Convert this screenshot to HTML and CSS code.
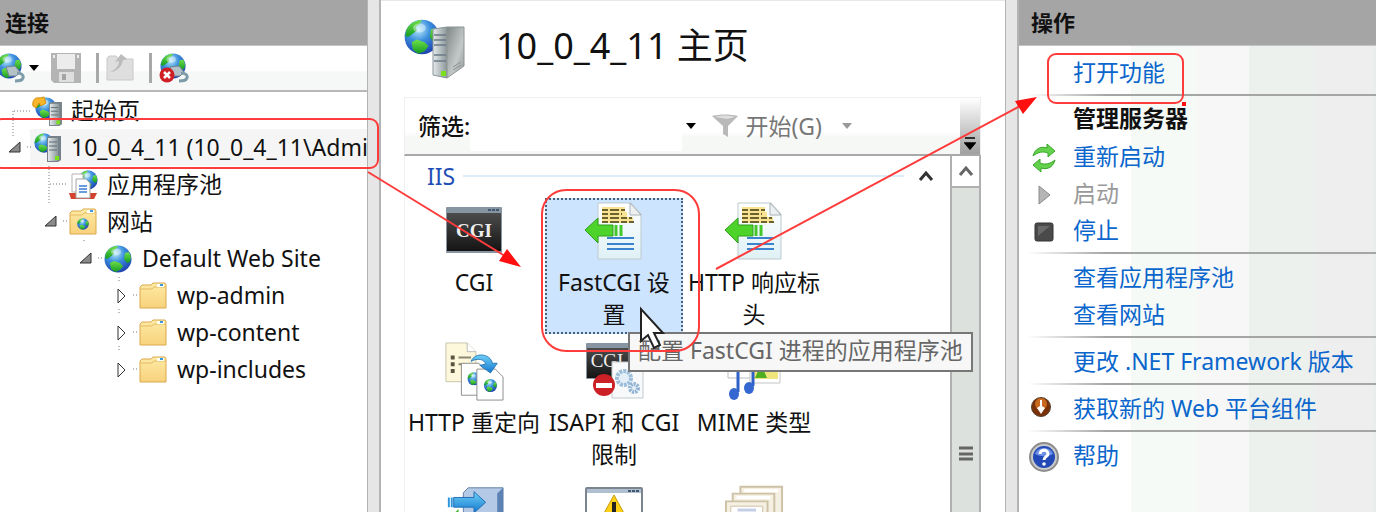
FILE: index.html
```html
<!DOCTYPE html>
<html lang="zh-CN">
<head>
    <meta charset="UTF-8">
    <meta name="viewport" content="width=device-width, initial-scale=1.0">
    <title>10_0_4_11 主页</title>
    <link rel="stylesheet" href="styles.css">
</head>
<body>
    <!-- Shared icon shapes -->
    <svg class="defs" aria-hidden="true">
        <defs>
            <radialGradient id="sea" cx="0.4" cy="0.28" r="0.75">
                <stop offset="0" stop-color="#b8ecfb"/>
                <stop offset="0.45" stop-color="#3b8fdd"/>
                <stop offset="1" stop-color="#1c3fae"/>
            </radialGradient>
            <linearGradient id="land" x1="0" y1="0" x2="0" y2="1">
                <stop offset="0" stop-color="#6fe04a"/>
                <stop offset="1" stop-color="#149a22"/>
            </linearGradient>
            <linearGradient id="metal" x1="0" y1="0" x2="1" y2="0">
                <stop offset="0" stop-color="#e4eaec"/>
                <stop offset="1" stop-color="#8b9698"/>
            </linearGradient>
            <linearGradient id="side" x1="0" y1="0" x2="1" y2="1">
                <stop offset="0" stop-color="#7f8787"/>
                <stop offset="0.6" stop-color="#c3c9c8"/>
                <stop offset="1" stop-color="#8e9595"/>
            </linearGradient>
            <linearGradient id="folderFill" x1="0" y1="0" x2="0" y2="1">
                <stop offset="0" stop-color="#fdeaa4"/>
                <stop offset="1" stop-color="#f8d27c"/>
            </linearGradient>
            <linearGradient id="dark" x1="0" y1="0" x2="0" y2="1">
                <stop offset="0" stop-color="#4c4c4c"/>
                <stop offset="1" stop-color="#141414"/>
            </linearGradient>
            <linearGradient id="paper" x1="0" y1="0" x2="0" y2="1">
                <stop offset="0" stop-color="#ffffff"/>
                <stop offset="1" stop-color="#dff1f6"/>
            </linearGradient>
            <linearGradient id="blueArrow" x1="0" y1="0" x2="0" y2="1">
                <stop offset="0" stop-color="#6fd0f6"/>
                <stop offset="1" stop-color="#1478d0"/>
            </linearGradient>
        </defs>
        <symbol id="globe" viewBox="0 0 28 28">
            <circle cx="14" cy="14" r="13.5" fill="url(#sea)"/>
            <path d="M2 8C5 3 9 1 14 1L12 4L9 6L10 9L6 12L3 14L1 13Z" fill="url(#land)"/>
            <path d="M21 8L25 7L27 12L26 17L23 18L20 14Z" fill="url(#land)"/>
            <path d="M6 18L10 16L16 18L19 21L16 25L11 27L7 24Z" fill="url(#land)"/>
            <ellipse cx="12" cy="7" rx="5" ry="3.500" fill="#fff" opacity="0.4"/>
        </symbol>
        <symbol id="server" viewBox="0 0 14 26">
            <path d="M2 0H14V24L11 26H0V2Z" fill="#76828a"/>
            <path d="M1 2H11V25H1Z" fill="url(#metal)"/>
            <path d="M2 6H10M2 10H10M2 14H10" stroke="#5a6a74"/>
            <rect x="8" y="20" width="4" height="4" fill="#7be01c"/>
        </symbol>
        <symbol id="folder" viewBox="0 0 28 28">
            <path d="M1 5L3 3H12L14 1H26L27 3V26H1Z" fill="url(#folderFill)" stroke="#d9a94e"/>
            <path d="M1 7H13L15 5H27" fill="none" stroke="#e3bb66"/>
            <rect x="18" y="2" width="7" height="3" fill="#fff"/>
            <rect x="21" y="2" width="3" height="2" fill="#3a98e0"/>
        </symbol>
        <symbol id="plug" viewBox="0 0 30 30">
            <use href="#globe" x="1" y="0" width="26" height="26"/>
            <path d="M11 14L20 13L25 19L21 23H14Z" fill="#b4c2c8" stroke="#73868f"/>
            <path d="M22 20C26 20 29 22 28 25C27 28 24 28 20 28" fill="none" stroke="#7d9ba8" stroke-width="3"/>
        </symbol>
        <symbol id="headers" viewBox="0 0 60 60">
            <path d="M14 1H47L57 12V57H14Z" fill="url(#paper)" stroke="#bccace"/>
            <path d="M46 1V13H57Z" fill="#eef1f2" stroke="#a9b4b8"/>
            <path d="M18 8H41M18 13H43M18 18H49" stroke="#f7e391" stroke-width="6"/>
            <path d="M18 8H41M18 12H38M18 16H48M18 20H50" stroke="#6d622e" stroke-width="2" stroke-dasharray="6 2 9 2"/>
            <path d="M23 36H50M23 42H50M23 47H50" stroke="#3c83cf" stroke-width="2"/>
            <path d="M1 28L14 16V23H29V34H14V41Z" fill="#4ed32b" stroke="#2f9e1c"/>
            <path d="M32 23V34M37 23V34" stroke="#45c62a" stroke-width="3"/>
        </symbol>
    </svg>

    <div class="window">
        <!-- Connections -->
        <section class="panel connections">
            <h2 class="panel-title">连接</h2>
            <div class="toolbar">
                <button class="tool first" aria-label="连接"><svg width="30" height="30"><use href="#plug"/></svg></button>
                <button class="tool caret" aria-label="更多"><svg width="12" height="6"><path d="M1 0H11L6 6Z"/></svg></button>
                <button class="tool save" aria-label="保存">
                    <svg width="30" height="30" viewBox="0 0 30 30"><path d="M0 0H30V30H3L0 27Z" fill="#b4b4b4"/><rect x="6" y="1" width="18" height="15" fill="#ececec"/><rect x="8" y="19" width="15" height="10" fill="#dedede"/><rect x="11" y="21" width="4" height="6" fill="#a4a4a4"/><rect x="2" y="2" width="2" height="3" fill="#eee"/><rect x="26" y="2" width="2" height="3" fill="#eee"/></svg>
                </button>
                <span class="divider"></span>
                <button class="tool" aria-label="向上">
                    <svg width="28" height="30" viewBox="0 0 28 30"><path d="M1 5L3 3H10L13 6H27V27H1Z" fill="#dedede" stroke="#c9c9c9"/><path d="M4 19C10 17 13 12 13 8L9 9L15 1L21 6L17 7C16 13 11 19 4 19Z" fill="#bcbcbc"/></svg>
                </button>
                <span class="divider"></span>
                <button class="tool" aria-label="断开">
                    <svg width="30" height="30" viewBox="0 0 30 30"><use href="#plug"/><circle cx="8" cy="22" r="7.500" fill="#cf1f24"/><path d="M5 19L11 25M11 19L5 25" stroke="#fff" stroke-width="2.500"/></svg>
                </button>
            </div>
            <ul class="tree">
                <li class="node">
                    <svg class="lines" viewBox="0 0 32 37"><path d="M13 19V37M14 19H32"/></svg>
                    <svg class="node-icon" viewBox="0 0 30 30"><use href="#globe" x="3" y="1" width="22" height="22"/><path d="M1 10C0 4 3 1 8 2L12 1L14 7L9 10L7 7L4 12Z" fill="#f7b52c" stroke="#d98d13"/><use href="#server" x="17" y="6" width="13" height="24"/></svg>
                    <span class="node-name">起始页</span>
                </li>
                <li class="node selected">
                    <button class="toggle" aria-label="折叠">
                        <svg class="lines" viewBox="0 0 32 37"><path d="M13 0V8M27 18H32"/><path class="open" d="M9 23L20 13V23Z"/></svg>
                    </button>
                    <svg class="node-icon" viewBox="0 0 30 30"><use href="#globe" x="2" y="0" width="20" height="20"/><use href="#server" x="15" y="3" width="14" height="26"/></svg>
                    <span class="node-name">10_0_4_11 (10_0_4_11\Admi</span>
                </li>
                <li class="node level-2">
                    <svg class="lines" viewBox="0 0 32 37"><path d="M13 0V37M14 18H32"/></svg>
                    <svg class="node-icon" viewBox="0 0 30 30"><use href="#globe" x="10" y="0" width="20" height="20"/><path d="M1 23H29L26 29H3Z" fill="#d2422f"/><path d="M4 4H15V22H4Z" fill="#fff" stroke="#b3b3b3"/><path d="M8 9H18L22 13V28H8Z" fill="#fdfdfd" stroke="#a5a5a5"/><path d="M11 16H19M11 19H19M11 22H19" stroke="#3a7dd2" stroke-width="1.500"/></svg>
                    <span class="node-name">应用程序池</span>
                </li>
                <li class="node level-2">
                    <button class="toggle" aria-label="折叠">
                        <svg class="lines" viewBox="0 0 32 37"><path d="M27 18H32"/><path class="open" d="M9 23L20 13V23Z"/></svg>
                    </button>
                    <svg class="node-icon" viewBox="0 0 30 30"><use href="#folder" x="1" y="1" width="28" height="28"/><use href="#globe" x="9" y="11" width="12" height="12"/></svg>
                    <span class="node-name">网站</span>
                </li>
                <li class="node level-3">
                    <button class="toggle" aria-label="折叠">
                        <svg class="lines" viewBox="0 0 32 37"><path d="M13 0V3M27 18H32"/><path class="open" d="M9 23L20 13V23Z"/></svg>
                    </button>
                    <svg class="node-icon" viewBox="0 0 30 30"><use href="#globe" x="1" y="1" width="28" height="28"/></svg>
                    <span class="node-name">Default Web Site</span>
                </li>
                <li class="node level-4">
                    <button class="toggle" aria-label="展开">
                        <svg class="lines" viewBox="0 0 32 37"><path d="M13 0V4M13 32V37M27 18H32"/><path class="closed" d="M12 12V26L19 19Z"/></svg>
                    </button>
                    <svg class="node-icon" viewBox="0 0 30 30"><use href="#folder" x="1" y="1" width="28" height="28"/></svg>
                    <span class="node-name">wp-admin</span>
                </li>
                <li class="node level-4">
                    <button class="toggle" aria-label="展开">
                        <svg class="lines" viewBox="0 0 32 37"><path d="M13 32V37M27 18H32"/><path class="closed" d="M12 12V26L19 19Z"/></svg>
                    </button>
                    <svg class="node-icon" viewBox="0 0 30 30"><use href="#folder" x="1" y="1" width="28" height="28"/></svg>
                    <span class="node-name">wp-content</span>
                </li>
                <li class="node level-4">
                    <button class="toggle" aria-label="展开">
                        <svg class="lines" viewBox="0 0 32 37"><path d="M27 18H32"/><path class="closed" d="M12 12V26L19 19Z"/></svg>
                    </button>
                    <svg class="node-icon" viewBox="0 0 30 30"><use href="#folder" x="1" y="1" width="28" height="28"/></svg>
                    <span class="node-name">wp-includes</span>
                </li>
            </ul>
        </section>

        <div class="splitter"></div>

        <!-- Home -->
        <main class="home">
            <header class="home-header">
                <svg width="62" height="62" viewBox="0 0 62 62">
                    <use href="#globe" x="0" y="1" width="36" height="36"/>
                    <path d="M29 11L43 9V60L29 57Z" fill="url(#metal)" stroke="#8a9499"/>
                    <path d="M43 9H60V48L43 60Z" fill="url(#side)" stroke="#8e9494"/>
                    <path d="M30 17H42M30 22H42M30 27H42M30 37H42M30 43H42" stroke="#697a86" stroke-width="1.500"/>
                    <path d="M49 49L57 44M49 52L57 47" stroke="#8b8f8e"/>
                    <rect x="37" y="53" width="5" height="5" fill="#7be01c"/>
                </svg>
                <h1>10_0_4_11 主页</h1>
            </header>

            <div class="filter-bar">
                <label class="filter-label" for="filter">筛选:</label>
                <input class="filter-input" id="filter" type="text">
                <button class="tool caret" aria-label="筛选历史"><svg width="12" height="6"><path d="M1 0H11L6 6Z"/></svg></button>
                <button class="tool go">
                    <svg width="26" height="24" viewBox="0 0 26 24"><path d="M0 2C8 0 18 0 26 2L16 12V23L11 20V12Z" fill="#b9b9b9"/><path d="M3 3C9 1 17 1 23 3L15 5Z" fill="#dedede"/></svg>
                    <span>开始(G)</span>
                </button>
                <button class="tool caret muted" aria-label="开始选项"><svg width="12" height="6"><path d="M1 0H11L6 6Z"/></svg></button>
                <button class="overflow" aria-label="更多"><svg width="12" height="13"><path d="M1 1H11M1 6H11L6 12Z" stroke="#000" stroke-width="1.500"/></svg></button>
            </div>

            <div class="list">
                <div class="list-body">
                    <div class="group">
                        <span class="group-name">IIS</span>
                        <span class="group-line"></span>
                        <button class="tool" aria-label="折叠"><svg width="16" height="12"><path d="M2 10L8 3L14 10" fill="none" stroke="#333" stroke-width="3"/></svg></button>
                    </div>
                    <div class="features">
                        <button class="feature">
                            <svg width="60" height="60" viewBox="0 0 60 60"><rect x="2" y="5" width="56" height="46" rx="1" fill="#8795a3"/><rect x="3" y="11" width="54" height="38" fill="url(#dark)"/><path d="M44 8H56" stroke="#43576e" stroke-width="2" stroke-dasharray="3 1"/><text class="cgi" x="30" y="35">CGI</text></svg>
                            <span>CGI</span>
                        </button>
                        <button class="feature active">
                            <svg width="60" height="60"><use href="#headers"/></svg>
                            <span>FastCGI 设<br>置</span>
                        </button>
                        <button class="feature">
                            <svg width="60" height="60"><use href="#headers"/></svg>
                            <span>HTTP 响应标<br>头</span>
                        </button>
                        <button class="feature">
                            <svg width="60" height="60" viewBox="0 0 62 62"><path d="M2 1H24L33 10V41H2Z" fill="#fdf8dc" stroke="#c8c4ab"/><path d="M24 1V10H33" fill="#fff" stroke="#b9b9b9"/><path d="M7 16H11M7 23H11M7 30H11" stroke="#5c5440" stroke-width="4"/><path d="M15 16H28M15 23H22" stroke="#8c8674" stroke-width="2"/><path d="M18 22H36L41 28V55H18Z" fill="#fff" stroke="#8d8d8d"/><use href="#globe" x="24" y="31" width="14" height="14"/><path d="M34 28H53L61 36V60H34Z" fill="#fff" stroke="#8d8d8d"/><use href="#globe" x="41" y="38" width="14" height="14"/><path d="M28 20C32 10 48 12 50 22H55L48 32L37 24L43 23C42 18 35 16 28 20Z" fill="url(#blueArrow)" stroke="#2a7ab8"/></svg>
                            <span>HTTP 重定向</span>
                        </button>
                        <button class="feature">
                            <svg width="60" height="60" viewBox="0 0 60 60"><rect x="2" y="1" width="56" height="36" rx="1" fill="#8795a3"/><rect x="3" y="6" width="54" height="30" fill="url(#dark)"/><text class="cgi thin" x="23" y="25">CGI</text><path d="M28 20H59V56H28Z" fill="#f7f9fa" stroke="#c4cacd"/><circle cx="40" cy="36" r="7" fill="#e3eef6" stroke="#9cbedb" stroke-width="4" stroke-dasharray="3 1"/><circle cx="50" cy="46" r="4" fill="#e3eef6" stroke="#8fb2d3" stroke-width="4" stroke-dasharray="2 1"/><circle cx="20" cy="43" r="11" fill="#cb2026"/><rect x="12" y="41" width="16" height="5" fill="#fff"/></svg>
                            <span>ISAPI 和 CGI<br>限制</span>
                        </button>
                        <button class="feature">
                            <svg width="60" height="60" viewBox="0 0 60 60"><path d="M4 10H30V36H4Z" fill="#fff" stroke="#b8bdbe"/><path d="M26 10H56V41H26Z" fill="#fff" stroke="#c4c4c4"/><rect x="30" y="14" width="24" height="23" fill="#efe57c"/><path d="M31 36L37 22L43 36Z" fill="#4fae1f"/><path d="M14 50V28L29 24V44" fill="none" stroke="#2f62c9" stroke-width="3"/><ellipse cx="10" cy="52" rx="5" ry="6" fill="#3567d0"/><ellipse cx="25" cy="46" rx="5" ry="6" fill="#3567d0"/></svg>
                            <span>MIME 类型</span>
                        </button>
                        <button class="feature" aria-label="服务器">
                            <svg width="60" height="60" viewBox="0 0 62 62"><path d="M20 11L25 6H61V62H20Z" fill="#b3c9e6" stroke="#5f7da5"/><path d="M55 12L61 6V62H55Z" fill="#5c81b3"/><path d="M10 16H31V10L43 21L31 32V26H10Z" fill="url(#blueArrow)" stroke="#1f6fb5"/><path d="M5 16V26M8 16V26" stroke="#2d94dc" stroke-width="2"/><path d="M8 35L15 28V38Z" fill="#43b52c"/></svg>
                        </button>
                        <button class="feature" aria-label="警告">
                            <svg width="60" height="60" viewBox="0 0 60 60"><rect x="2" y="6" width="56" height="54" rx="1" fill="#fff" stroke="#7b8590" stroke-width="2"/><rect x="3" y="7" width="54" height="4" fill="#b0c0d0"/><path d="M44 9H56" stroke="#43576e" stroke-width="2" stroke-dasharray="3 1"/><path d="M30 13L47 44H13Z" fill="#fcd116" stroke="#c79a0a"/><path d="M30 20V31" stroke="#222" stroke-width="4"/></svg>
                        </button>
                        <button class="feature" aria-label="证书">
                            <svg width="60" height="60" viewBox="0 0 62 62"><g fill="#f6f0e2" stroke="#cdc1a6" stroke-width="2"><path d="M17 5H60V50H17Z"/><path d="M9 12H52V55H9Z"/><path d="M2 20H45V62H2Z"/></g><path d="M21 9H56M13 16H48" stroke="#fff" stroke-width="3"/><path d="M7 25H40V62H7Z" fill="#fff" stroke="#cdc1a6"/><path d="M14 29H33" stroke="#c4cee6" stroke-width="3"/></svg>
                        </button>
                    </div>
                </div>
                <div class="scrollbar">
                    <button class="scroll-up" aria-label="向上滚动"><svg width="16" height="12"><path d="M2 10L8 3L14 10" fill="none" stroke="#666" stroke-width="3"/></svg></button>
                    <div class="thumb"><svg width="14" height="16"><path d="M0 2H14M0 8H14M0 13H14" stroke="#666" stroke-width="3"/></svg></div>
                </div>
            </div>
        </main>

        <div class="splitter"></div>

        <!-- Actions -->
        <section class="panel actions">
            <h2 class="panel-title">操作</h2>
            <ul class="action-list">
                <li class="action"><a href="#">打开功能</a></li>
                <li class="rule"></li>
                <li class="action heading">管理服务器</li>
                <li class="action">
                    <svg viewBox="0 0 30 30"><path d="M4 13C6 5 13 3 18 5V1L26 8L19 14V10C14 8 9 9 4 13Z" fill="#63d14c" stroke="#3aa52c"/><path d="M26 17C24 25 17 27 12 25V29L4 22L11 16V20C16 22 21 21 26 17Z" fill="#63d14c" stroke="#3aa52c"/></svg>
                    <a href="#">重新启动</a>
                </li>
                <li class="action disabled">
                    <svg viewBox="0 0 30 30"><path d="M10 6L21 15L10 24Z" fill="#b5b5b5" stroke="#8c8c8c"/></svg>
                    <span>启动</span>
                </li>
                <li class="action">
                    <svg viewBox="0 0 30 30"><rect x="6" y="6" width="18" height="18" rx="2" fill="#4a4a4a" stroke="#333"/><path d="M9 9H21L9 19Z" fill="#6a6a6a"/></svg>
                    <a href="#">停止</a>
                </li>
                <li class="rule"></li>
                <li class="action"><a href="#">查看应用程序池</a></li>
                <li class="action"><a href="#">查看网站</a></li>
                <li class="rule"></li>
                <li class="action"><a href="#">更改 .NET Framework 版本</a></li>
                <li class="rule"></li>
                <li class="action">
                    <svg viewBox="0 0 30 30"><circle cx="12" cy="12" r="9.500" fill="#7a3108" stroke="#57412f"/><circle cx="12" cy="9" r="6" fill="#c9691f"/><path d="M11 5H13V11L16 13L12 19L8 13L11 11Z" fill="#fff"/></svg>
                    <a href="#">获取新的 Web 平台组件</a>
                </li>
                <li class="rule"></li>
                <li class="action">
                    <svg viewBox="0 0 30 30"><circle cx="15" cy="15" r="14" fill="#c9c9c9" stroke="#8c8c8c" stroke-width="2"/><circle cx="15" cy="15" r="11" fill="#2249b5"/><path d="M6 12C8 4 22 4 24 12C18 15 12 15 6 12Z" fill="#6b8fe6"/><path d="M11 12C11 7 19 7 19 12C19 15 15 14 15 18" fill="none" stroke="#fff" stroke-width="3"/><circle cx="15" cy="22" r="1.800" fill="#fff"/></svg>
                    <a href="#">帮助</a>
                </li>
            </ul>
        </section>

        <div class="tooltip">配置 FastCGI 进程的应用程序池</div>

        <!-- Step markers and mouse pointer -->
        <svg class="marks" viewBox="0 0 1376 512" aria-hidden="true">
            <path d="M641 309V341L648 335L654 348L660 345L654 333H663Z" fill="#fff" stroke="#222" stroke-width="2"/>
            <g class="mark-line">
                <rect x="-6" y="119" width="384" height="49" rx="8"/>
                <rect x="542" y="190" width="157" height="161" rx="24"/>
                <rect x="1048" y="54" width="135" height="49" rx="8"/>
                <path d="M368 172L505 256M716 269L1020 106"/>
            </g>
            <path class="mark-fill" d="M521 267L499 261L507 249ZM1037 97L1015 101L1023 114ZM1182 102H1186V106H1182Z"/>
        </svg>
    </div>
</body>
</html>
```
FILE: styles.css
```css
* {
    box-sizing: border-box;
}
body {
    font-family: "Noto Sans", "Noto Sans CJK SC", sans-serif;
    font-size: 23px;
    line-height: 32px;
    margin: 0;
    color: #111;
    background-color: #fff;
}
h1, h2, ul {
    margin: 0;
    padding: 0;
    list-style: none;
}
svg {
    display: block;
    flex: none;
}
button {
    font: inherit;
    color: inherit;
    padding: 0;
    border: 0;
    background: none;
}
.defs {
    position: absolute;
    width: 0;
    height: 0;
}

.window {
    display: grid;
    grid-template-columns: 367px 14px minmax(0, 1fr) 14px 357px;
    height: 100vh;
    position: relative;
    overflow: hidden;
}
.splitter {
    background-color: #e6e6e6;
    border: solid #b4b4b4;
    border-width: 0 2px 0 1px;
}

/* Side panels */
.panel {
    min-width: 0;
    overflow: hidden;
}
.panel-title {
    height: 46px;
    padding: 0 12px;
    background-color: #a5a5a5;
    border-bottom: 1px solid #c4c4c4;
    font-size: 22px;
    line-height: 44px;
}
.connections .panel-title {
    padding: 0 5px;
}

/* Toolbar */
.toolbar {
    display: flex;
    align-items: center;
    height: 46px;
    background: linear-gradient(#fff 55%, #f5f8f6 60%);
    border-bottom: 2px solid #b8b8b8;
}
.tool {
    display: flex;
    align-items: center;
}
.tool.first {
    margin-left: -5px;
}
.tool.caret {
    margin: 0 3px;
}
.tool.save {
    margin-left: 8px;
}
.divider {
    width: 3px;
    height: 30px;
    margin: 0 7px 0 15px;
    background-color: #a8a8a8;
}

/* Tree */
.node {
    display: flex;
    align-items: center;
    height: 37px;
    white-space: nowrap;
}
.node-name {
    padding-bottom: 2px;
}
.node.selected {
    background: linear-gradient(#f5f5f5, #f5f5f5) 30px 0 no-repeat;
}
.level-2 {
    padding-left: 36px;
}
.level-3 {
    padding-left: 71px;
}
.level-4 {
    padding-left: 106px;
}
.lines {
    width: 32px;
    height: 37px;
}
.lines path {
    fill: none;
    stroke: #777;
    stroke-dasharray: 1 2;
}
.lines .open {
    fill: #8a8a8a;
    stroke: #333;
    stroke-dasharray: none;
}
.lines .closed {
    fill: #fff;
    stroke: #333;
    stroke-dasharray: none;
}
.node-icon {
    width: 30px;
    height: 30px;
    margin-right: 9px;
}

/* Home */
.home {
    display: flex;
    flex-direction: column;
    min-width: 0;
    padding: 0 24px 0 23px;
    border-top: 1px solid #e8e8e8;
    overflow: hidden;
}
.home-header {
    display: flex;
    align-items: center;
    flex: none;
    gap: 30px;
    height: 96px;
}
.home-header h1 {
    font-size: 36px;
    line-height: 40px;
    font-weight: normal;
    padding-bottom: 6px;
}
.filter-bar {
    display: flex;
    align-items: center;
    flex: none;
    height: 59px;
    padding-left: 13px;
    background: linear-gradient(#fff 60%, #f6f8f6 70%);
    border: 1px solid #efefef;
    border-bottom: 2px solid #a8a8a8;
}
.filter-label {
    font-weight: 500;
}
.filter-input {
    flex: 1;
    min-width: 0;
    height: 50px;
    border: 0;
    font: inherit;
    background-color: #fff;
}
.go {
    gap: 7px;
    margin: 0 16px 0 12px;
    color: #777;
}
.muted {
    fill: #999;
}
.overflow {
    display: flex;
    align-items: flex-end;
    justify-content: center;
    align-self: stretch;
    width: 20px;
    margin-left: 104px;
    padding-bottom: 4px;
    background: linear-gradient(#fff, #a0a0a0);
}
.list {
    display: flex;
    flex: 1;
    min-height: 0;
    border-left: 1px solid #efefef;
}
.list-body {
    flex: 1;
    min-width: 0;
    overflow: hidden;
}
.group {
    display: flex;
    align-items: center;
    gap: 8px;
    height: 40px;
    padding: 0 16px 0 22px;
}
.group-name {
    color: #1f4fb5;
}
.group-line {
    flex: 1;
    height: 2px;
    margin-right: 6px;
    background-color: #dceefa;
}
.features {
    display: grid;
    grid-template-columns: repeat(auto-fill, 138px);
    grid-auto-rows: 136px;
    gap: 4px 2px;
    padding-top: 2px;
}
.feature {
    display: flex;
    flex-direction: column;
    align-items: center;
    gap: 4px;
    padding-top: 4px;
    white-space: nowrap;
}
.feature.active {
    background-color: #cde4fe;
    outline: 2px dotted #46607e;
    outline-offset: -2px;
}
.cgi {
    font: bold 19px "Liberation Serif", serif;
    fill: #eee;
    text-anchor: middle;
}
.cgi.thin {
    font-weight: normal;
}

/* Scrollbar */
.scrollbar {
    display: flex;
    flex-direction: column;
    width: 31px;
}
.scroll-up {
    display: flex;
    align-items: center;
    justify-content: center;
    flex: none;
    height: 32px;
    border: 2px solid #b0b0b0;
    border-top: 0;
}
.thumb {
    display: flex;
    align-items: flex-end;
    justify-content: center;
    flex: 1;
    padding-bottom: 50px;
    background-color: #dce1dd;
    border: solid #b0b0b0;
    border-width: 0 2px;
}

/* Actions */
.actions {
    background: linear-gradient(to right, #fff 112px, #f5faf6 112px 178px, #f7f7f7 178px 230px, #edf1ee 230px 296px, #eee 296px 354px, #e9eeea 354px);
}
.action-list {
    padding-top: 9px;
}
.action {
    display: grid;
    grid-template-columns: 30px 1fr;
    align-items: center;
    column-gap: 14px;
    height: 37px;
    padding-left: 10px;
    white-space: nowrap;
}
.action > :last-child {
    grid-column: 2;
}
.action > a,
.action > span {
    padding-bottom: 4px;
}
.action a {
    color: #0a66cc;
    text-decoration: none;
}
.action.heading {
    display: block;
    padding-left: 54px;
    font-weight: bold;
}
.disabled {
    color: #999;
}
.rule {
    height: 2px;
    margin: 2px 0 6px 8px;
    background: linear-gradient(to right, transparent, #a5a5a5 80px);
}

/* Tooltip */
.tooltip {
    position: absolute;
    left: 628px;
    top: 332px;
    padding: 0 8px 4px;
    color: #666;
    background-color: #f7f7f7;
    border: 2px solid #777;
    white-space: nowrap;
}

/* Markers */
.marks {
    position: absolute;
    left: 0;
    top: 0;
    width: 1376px;
    height: 512px;
    pointer-events: none;
}
.mark-line {
    fill: none;
    stroke: #ff3c3c;
    stroke-width: 2;
}
.mark-fill {
    fill: #ff1010;
}
```
